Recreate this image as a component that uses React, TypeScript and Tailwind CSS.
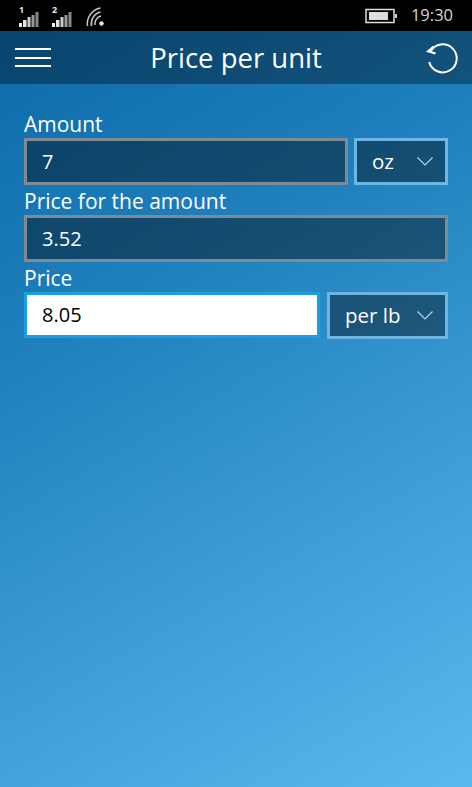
import React from "react";

const font = "font-['Open_Sans','Noto_Sans',sans-serif]";

function Signal({ n }: { n: string }) {
  return (
    <div className="relative w-[24px] h-[24px]">
      <span className="absolute left-[2px] top-[1px] text-[9px] leading-[9px] font-bold text-[#e8e8e8]">{n}</span>
      <svg width="24" height="24" viewBox="0 0 24 24" className="absolute left-0 top-0">
        <rect x="2" y="19" width="3" height="4" fill="#eee" />
        <rect x="6" y="16" width="3.5" height="7" fill="#e4e4e4" />
        <rect x="10.5" y="13" width="3" height="10" fill="#ccc" />
        <rect x="14.5" y="11" width="3" height="12" fill="#999" />
        <rect x="18.5" y="8" width="3" height="15" fill="#888" />
      </svg>
    </div>
  );
}

function Chevron() {
  return (
    <svg width="16" height="9" viewBox="0 0 16 9" fill="none" className="shrink-0">
      <path d="M0.5 0.5l7.5 7.5 7.5-7.5" stroke="#b9d9ee" strokeWidth="1.1" />
    </svg>
  );
}

function Field({ value }: { value: string }) {
  return (
    <div className="flex-1 min-h-[47px] h-[47px] border-[3px] border-[#7f8a92] bg-black/40 flex items-center pl-[15px] text-[20px] text-white">
      {value}
    </div>
  );
}

function Combo({ value, w }: { value: string; w: string }) {
  return (
    <div className={`${w} h-[47px] border-[3px] border-[#6db6e4] bg-black/40 flex items-center justify-between pl-[15px] pr-[12px] text-[20.5px] text-white`}>
      <span>{value}</span>
      <Chevron />
    </div>
  );
}

function Label({ children }: { children: React.ReactNode }) {
  return <div className="h-[30px] flex items-end text-[21px] leading-[28px] text-white">{children}</div>;
}

export default function App() {
  return (
    <div className={`${font} w-[472px] h-[787px] flex flex-col overflow-hidden bg-[linear-gradient(150deg,#0b68a8_0%,#1f80bd_35%,#5cb9ef_100%)]`}>
      <div className="h-[31px] bg-black flex items-center justify-between pl-[17px] pr-[17px] shrink-0">
        <div className="flex items-center">
          <Signal n="1" />
          <div className="w-[9px]" />
          <Signal n="2" />
          <svg width="22" height="22" viewBox="0 0 22 22" fill="none" className="ml-[11px]">
            <circle cx="16.5" cy="18.5" r="2.2" fill="#e4e4e4" />
            <path d="M10 20a8 8 0 0 1 6-9M6.5 21a12 12 0 0 1 9-14M2.5 21a16 16 0 0 1 13-18" stroke="#c8c8c8" strokeWidth="1.5" />
          </svg>
        </div>
        <div className="flex items-center">
          <svg width="32" height="16" viewBox="0 0 32 16" fill="none">
            <rect x="1" y="1.5" width="28" height="13" stroke="#ddd" strokeWidth="1.5" />
            <rect x="4" y="4" width="19" height="8" fill="#ddd" />
            <rect x="30" y="6" width="2" height="4" fill="#ccc" />
          </svg>
          <span className="ml-[14px] mr-[2px] text-[16.5px] text-[#d6d6d6] leading-none">19:30</span>
        </div>
      </div>

      <div className="relative h-[53px] shrink-0 flex items-center justify-center bg-black/35">
        <div className="absolute left-[15px] top-[17px] w-[36px] flex flex-col gap-[6.5px]">
          <div className="h-[2px] bg-white" />
          <div className="h-[2px] bg-white" />
          <div className="h-[2px] bg-white" />
        </div>
        <span className="text-[27.5px] text-white leading-none">Price per unit</span>
        <svg width="34" height="34" viewBox="0 0 34 34" fill="none" className="absolute left-[426px] top-[11px]">
          <path d="M4.5 9.5A14 14 0 1 1 3.2 20" stroke="#fff" strokeWidth="2" />
          <path d="M7.5 4.5L2 9.3L9.5 11.5" stroke="#fff" strokeWidth="2" />
        </svg>
      </div>

      <div className="flex flex-col px-[24px] pt-[24px]">
        <Label>Amount</Label>
        <div className="flex gap-[6px]">
          <Field value="7" />
          <Combo value="oz" w="w-[94px]" />
        </div>
        <Label>Price for the amount</Label>
        <div className="flex">
          <Field value="3.52" />
        </div>
        <Label>Price</Label>
        <div className="flex gap-[7px]">
          <div className="w-[296px] h-[46px] border-[3px] border-[#1b9fe2] bg-white flex items-center pl-[15px] text-[20px] text-black">
            8.05
          </div>
          <Combo value="per lb" w="w-[121px]" />
        </div>
      </div>
    </div>
  );
}
